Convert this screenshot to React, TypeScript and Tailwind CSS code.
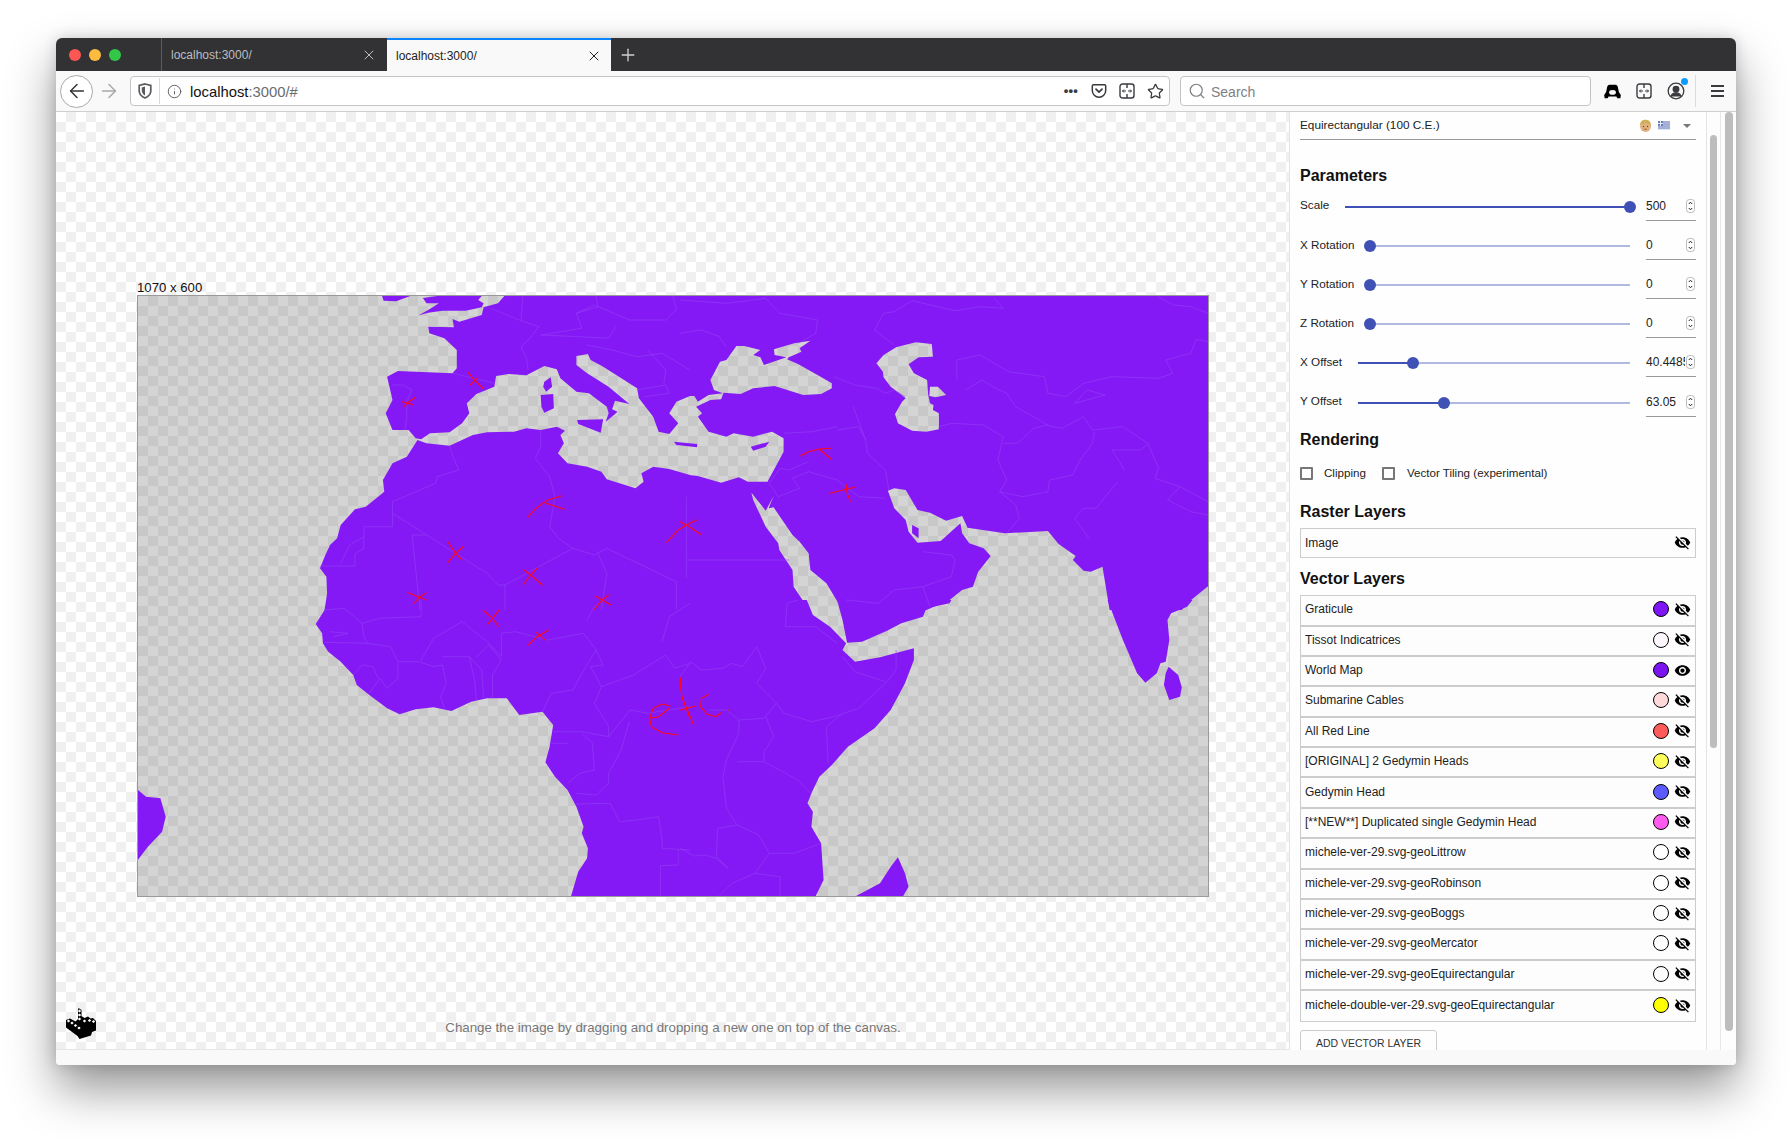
import React from "react";
import { ArrowLeft, ArrowRight, Info, Plus, Search, Star, X } from "lucide-react";
import { MdVisibility, MdVisibilityOff } from "react-icons/md";

type Off = [number, number];
const A: Off = [0, 0];
const B: Off = [1540, 0];
const C: Off = [0, 990];
const D: Off = [1540, 990];

const conv = (o: Off, s: string) =>
  s
    .trim()
    .split(/\s+/)
    .map((p) => {
      const [x, y] = p.split(",").map(Number);
      return `${((x + o[0]) / 2.8 - 8).toFixed(1)},${((y + o[1]) / 3 - 26).toFixed(1)}`;
    })
    .join(" ");

const LAND: [Off, string[]][] = [
  [
    A,
    [
      "706,78 785,78 745,94 710,92",
      "820,84 860,78 985,78 975,90 990,100 985,112 940,122 875,122 835,128 808,136 835,120 865,100 830,100",
      "1050,76 1030,100 990,112 985,135 922,155 903,147 907,172 835,170 838,190 880,205 915,240 915,295 903,310 750,303 720,320 735,390 716,430 735,480 780,480 800,505 815,508 840,490 895,487 930,460 950,430 943,400 970,372 1020,350 1025,318 1060,312 1110,316 1160,288 1195,298 1205,325 1250,365 1285,370 1335,410 1340,430 1332,455 1355,435 1365,425 1350,418 1358,392 1398,402 1340,350 1280,310 1250,285 1250,258 1282,252 1290,270 1325,290 1420,355 1425,385 1465,440 1480,485 1510,492 1535,460 1510,430 1530,395 1568,378 1568,76",
      "1252,450 1325,448 1318,488 1255,462",
      "1150,375 1185,372 1187,415 1160,428 1152,410",
      "1160,335 1178,322 1182,350 1165,365 1157,350",
      "1523,515 1588,522 1588,532 1530,525",
      "805,510 830,520 895,527 960,495 1000,487 1075,485 1110,475 1150,480 1195,470 1218,482 1205,495 1215,520 1198,550 1225,580 1280,590 1320,605 1335,628 1415,655 1438,635 1432,610 1465,590 1510,597 1568,615 1568,1020 545,1020 552,970 550,920 532,895 545,860 560,825 580,805 590,765 630,718 660,710 712,665 708,630 735,580 775,560",
    ],
  ],
  [
    B,
    [
      "0,76 1479,76 1479,948 1420,1000 1405,1020 1203,1020 1183,890 1150,905 1130,902 1100,870 1108,858 1060,822 1030,783 910,790 805,773 790,738 745,752 700,728 665,720 632,660 600,655 582,662 600,715 632,750 640,785 665,818 730,813 785,760 790,790 810,820 850,835 870,858 835,905 820,950 790,960 755,990 690,1020 455,1020 410,940 365,900 360,850 335,815 315,795 262,712 248,715 262,678 240,722 200,668 205,690 240,770 275,820 278,840 315,900 318,950 362,1020 0,1020 0,612 50,618 115,638 165,622 190,635 245,635 260,605 290,545 290,505 258,485 205,500 150,490 130,500 80,485 50,440 62,430 45,410 85,390 115,388 122,368 170,372 205,355 265,348 345,375 395,372 425,355 425,340 385,315 330,282 300,268 305,262 340,245 335,235 365,212 320,220 263,238 265,255 298,262 235,285 225,262 205,255 225,240 180,228 158,228 130,270 112,275 85,330 95,360 120,370 80,375 50,395 40,378 0,378",
      "550,280 570,255 605,232 660,217 705,222 708,260 668,262 640,283 655,310 692,330 695,375 700,400 710,405 708,420 725,430 725,478 690,485 650,482 610,460 602,432 622,395 632,385 590,350 570,322 568,305",
      "700,350 722,350 745,375 715,382 698,378",
    ],
  ],
  [B, ["198,530 250,515 240,530 205,542", "650,765 668,775 668,805 650,790"]],
  [
    C,
    [
      "552,0 545,30 520,72 538,100 540,130 555,155 590,185 625,225 635,255 670,285 720,325 755,343 800,328 850,322 900,333 955,305 1000,295 1055,295 1090,345 1155,335 1185,375 1175,440 1163,487 1190,530 1225,570 1250,620 1270,680 1265,700 1282,745 1280,775 1255,815 1235,888 1568,888 1568,0",
      "22,570 45,590 85,595 100,650 90,695 50,740 22,780",
    ],
  ],
  [
    D,
    [
      "0,0 355,0 372,45 420,80 465,130 455,150 490,185 560,172 655,145 655,180 630,250 590,330 545,385 470,440 425,495 390,530 370,575 357,610 372,635 368,680 395,730 402,840 380,888 0,888",
      "440,0 455,60 468,128 510,125 580,92 620,70 680,50 690,25 755,10 760,0",
      "493,888 560,850 590,800 610,772 630,820 640,860 625,888",
      "1197,0 1240,120 1280,220 1303,248 1335,220 1345,190 1360,185 1370,120 1365,60 1375,40 1420,20 1435,0",
      "1368,200 1395,225 1405,262 1400,290 1370,300 1355,255 1360,220",
    ],
  ],
];

const BORDERS: [Off, string[]][] = [
  [
    A,
    [
      "903,310 945,320 1020,340",
      "735,345 765,345 790,360 775,395 775,440 770,480",
      "895,527 905,560 920,600 860,620 855,640 790,670 735,695",
      "735,695 735,770 655,770 655,835 630,850 630,888 533,888",
      "735,730 1000,910 1030,945 1050,945 1240,835 1300,855 1335,835 1530,935 1530,1020",
      "790,795 830,795",
      "790,795 812,1020",
      "1150,480 1150,530 1135,565 1175,620 1190,680 1175,770 1200,805 1240,835",
      "1050,945 1050,1020",
      "1310,850 1335,910 1320,1020",
      "1010,115 1090,150 1145,170 1120,205 1095,230 1110,265 1115,300",
      "1100,78 1095,150",
      "1280,225 1350,240 1420,260 1490,250 1568,300",
      "1250,130 1300,105 1400,150 1500,150 1530,120 1520,78",
      "1150,195 1260,200 1340,205 1360,170",
      "1420,360 1500,345 1510,370 1440,380",
      "1305,78 1310,110 1250,130 1265,175 1150,195",
      "1450,240 1500,300 1495,340",
      "590,880 615,825 655,800",
    ],
  ],
  [
    B,
    [
      "0,190 60,180 110,200 130,230",
      "0,90 130,100 240,85 280,130 385,150 380,190 330,220",
      "545,180 570,130 600,125 650,92 770,122 840,110 905,115 880,85",
      "545,180 600,225",
      "775,330 775,270 840,255 920,305 1020,320 1030,370 1080,380 1130,340 1210,320 1340,325 1380,310 1360,270 1430,250 1445,208 1479,215",
      "800,360 845,330 875,350 915,370 940,410 1035,468 1070,475 1130,440 1155,480 1240,470 1310,520 1340,595 1330,625 1400,650 1479,695",
      "1210,540 1290,540 1310,520",
      "1245,600 1210,540",
      "430,320 490,345 550,355 575,370 600,360 630,380",
      "485,410 520,510 525,550 575,600 585,660",
      "440,480 500,470 520,510",
      "290,490 370,485 440,470",
      "360,575 305,600 280,595 250,640 275,680 335,655 315,625 360,605 440,630 500,680 575,685",
      "725,470 760,460 850,465 905,500 890,570 915,630 895,665 940,705 950,745 915,790",
      "905,520 945,520 990,475 1030,465",
      "895,665 960,680 1030,665 1035,630 1100,615 1120,570 1155,520 1160,485",
      "1225,635 1165,715 1130,715 1105,745 1145,805",
      "1365,690 1400,650",
      "1365,690 1430,725 1479,735",
      "1105,400 1190,375 1140,360 1105,400",
      "18,680 18,925",
      "18,870 305,870",
      "680,845 760,855 770,870 760,920 680,950 700,1010",
      "465,990 555,1000 600,960 680,950",
      "1479,130 1430,110 1380,105 1340,80",
    ],
  ],
  [
    C,
    [
      "545,30 600,25 650,70 655,110 665,130 730,140 750,185 750,235 720,265 700,235 670,280",
      "650,70 700,55 815,50 815,0",
      "815,180 850,115 930,65 1000,125 1040,170 1040,100 1080,95 1170,120 1270,100 1305,150 1265,220 1240,270 1180,280 1155,335",
      "625,225 650,195 680,200 695,235",
      "750,185 810,185 850,200 875,195 885,250 870,290 880,325",
      "875,170 950,170 965,240 970,300",
      "950,170 985,210 990,295",
      "1015,295 1015,225 1040,180 1005,135 970,170",
      "545,127 670,130",
      "1305,150 1325,195 1290,200 1320,260 1410,225 1500,165 1525,205 1568,190",
      "1320,260 1300,310 1340,380 1340,410 1265,395 1185,395",
      "1340,410 1400,330 1450,340 1568,320",
      "1398,365 1375,450 1340,520 1340,550 1305,585 1250,580",
      "1250,612 1345,610 1370,665 1420,660 1480,650 1490,720 1490,745 1568,750",
      "1265,400 1295,430 1300,510 1260,520 1225,550",
      "1180,430 1225,430",
      "1485,888 1485,797 1535,795 1535,750",
      "1280,60 1300,20 1325,0",
      "1490,125 1510,50 1568,10",
      "560,95 610,100 570,110",
    ],
  ],
  [
    D,
    [
      "0,230 30,185 60,210 120,205 145,190 175,200 215,140 240,205 215,250 270,310 290,340 370,365 430,350 500,325 580,245 605,210 605,150",
      "295,80 300,10 330,0",
      "295,80 380,80 440,130",
      "455,170 490,215 575,245",
      "270,310 235,355 165,360 130,330 80,330",
      "165,360 165,400 130,480 120,530 125,575 130,625 160,675 220,705",
      "240,350 262,410 235,455 235,485 330,540 365,580",
      "160,485 235,485",
      "415,490 410,380 450,345",
      "220,705 250,760 320,760 395,730",
      "160,675 105,685 102,770 135,805 100,775 70,765 40,768 0,745",
      "250,760 210,820 145,850 110,888",
      "210,820 280,830 280,888",
    ],
  ],
];

const RED: [Off, string[]][] = [
  [
    A,
    [
      "945,305 960,325 990,357",
      "952,345 975,322",
      "765,412 780,395 800,382",
      "762,395 795,405",
      "1113,742 1140,712 1170,690 1207,678",
      "1165,700 1217,718",
      "890,816 912,850 930,870",
      "888,880 912,850 935,828",
      "1100,898 1122,915 1155,945",
      "1100,945 1122,915 1142,892",
      "778,968 810,982 830,990",
      "795,1000 810,982 830,968",
      "1302,977 1322,990 1347,1005",
      "1300,1018 1322,990 1340,975",
      "1502,818 1535,780 1558,765 1587,750",
      "1540,755 1558,765 1601,795",
    ],
  ],
  [
    B,
    [
      "337,558 360,545 390,537 423,535",
      "390,537 423,567",
      "420,670 465,658 490,652",
      "465,642 468,670 477,695",
    ],
  ],
  [
    C,
    [
      "988,30 1015,55 1032,80",
      "1000,75 1015,55 1035,28",
      "1115,135 1140,110 1172,90",
      "1135,95 1165,122",
      "1513,318 1490,312 1465,325 1455,355 1480,350 1510,325",
      "1455,355 1460,380 1490,398 1535,405",
      "1540,232 1545,290 1568,355",
    ],
  ],
  [
    D,
    [
      "0,232 5,290 38,375",
      "0,330 45,318",
      "80,283 60,295 58,320 75,342 100,350 115,338",
      "133,330 138,330",
    ],
  ],
];

const MapArt = () => (
  <svg width="1070" height="600" viewBox="0 0 1070 600" className="block overflow-hidden">
    {LAND.map(([o, polys], i) => (
      <path
        key={i}
        fill="#8419f6"
        fillRule="evenodd"
        d={polys.map((p) => "M" + conv(o, p).split(" ").join("L") + "Z").join("")}
      />
    ))}
    {BORDERS.map(([o, ls], i) =>
      ls.map((l, j) => (
        <polyline key={`${i}-${j}`} points={conv(o, l)} fill="none" stroke="#9440f3" strokeWidth="0.6" />
      ))
    )}
    {RED.map(([o, ls], i) =>
      ls.map((l, j) => (
        <polyline key={`${i}-${j}`} points={conv(o, l)} fill="none" stroke="#ff0a14" strokeWidth="1.1" />
      ))
    )}
  </svg>
);

const ReaderIcon = () => (
  <svg width="16" height="16" viewBox="0 0 16 16" fill="none" stroke="#3a3a3f" strokeWidth="1.4">
    <rect x="1" y="1" width="14" height="14" rx="2.5" />
    <path d="M8 1v4M8 11v4" />
    <path d="M3.5 8h3.5M12.5 8H9M5 6.5L3.5 8 5 9.500M11 6.5L12.5 8 11 9.500" strokeWidth="1" />
  </svg>
);

const PocketIcon = () => (
  <svg width="16" height="16" viewBox="0 0 16 16" fill="none" stroke="#3a3a3f" strokeWidth="1.5">
    <path d="M2.500 1.800h11c.7 0 1.200.5 1.200 1.200v4.500c0 3.700-3 6.700-6.700 6.700s-6.700-3-6.700-6.700V3c0-.7.5-1.200 1.200-1.200z" />
    <path d="M5 6.200L8 9.200l3-3" strokeWidth="1.700" strokeLinecap="round" strokeLinejoin="round" />
  </svg>
);

const ShieldIcon = () => (
  <svg width="14" height="16" viewBox="0 0 14 16" fill="none">
    <path d="M7 1l5.800 1.500v5.300c0 3.400-2.500 5.900-5.800 7.200C3.700 13.700 1.200 11.200 1.200 7.800V2.500z" stroke="#5b5b5f" strokeWidth="1.700" />
    <path d="M7 3.500v9c-1.700-1-3.200-2.600-3.200-4.800V4.400z" fill="#5b5b5f" />
  </svg>
);

const SpyIcon = () => (
  <svg width="17" height="17" viewBox="0 0 19 17" fill="#000">
    <path d="M6 1h7c1.200 0 2.200 1 2.600 3l1 5 2.200 3.500-.5 3.500h-3.300l-1.200-2H5.200L4 16H.7L.2 12.500 2.400 9l1-5C3.800 2 4.800 1 6 1z" />
    <ellipse cx="9.500" cy="9.500" rx="3.800" ry="2.600" fill="#f9f9fa" />
  </svg>
);

const ProfileIcon = () => (
  <div className="relative h-[18px] w-[18px]">
    <svg width="18" height="18" viewBox="0 0 18 18" fill="none" stroke="#3a3a3f" strokeWidth="1.300">
      <circle cx="9" cy="9" r="7.800" />
      <circle cx="9" cy="7.200" r="2.800" fill="#3a3a3f" />
      <path d="M3.800 14.500c1-2.600 2.900-3.600 5.200-3.600s4.200 1 5.200 3.600" fill="#3a3a3f" />
    </svg>
    <span className="absolute right-[-3px] top-[-4px] h-[7px] w-[7px] rounded-full bg-[#0a9dff]" />
  </div>
);

const Logo = () => (
  <svg width="30" height="31" viewBox="0 0 30 31" className="absolute bottom-[10px] left-[10px]">
    <path d="M12.500 0L15.500 2V8L18.500 10 22 8.500 24.500 10.500 27 10 30 13V22.500L26 24 25 27.500 13.500 31 11.500 28 0 19.500V12L4 10.500 9.500 13.500 12 11V2z" fill="#000" />
    {[
      [13.5, 3],
      [13.5, 7],
      [13.5, 11],
      [2.5, 13],
      [6, 15],
      [9.5, 17.5],
      [13, 20],
      [18.5, 13],
      [23.5, 12.5],
      [27.5, 13.5],
    ].map(([x, y], i) => (
      <path key={i} d={`M${x} ${y - 1.5}l1.700 1.500-1.700 1.500-1.700-1.500z`} fill="#fff" />
    ))}
  </svg>
);

const Spinner = () => (
  <svg width="9" height="14" viewBox="0 0 9 14" fill="none" className="mr-[1px] shrink-0">
    <rect x="0.500" y="0.500" width="8" height="13" rx="3" stroke="#bbb" />
    <path d="M2.800 5l1.700-1.800L6.200 5M2.800 9l1.700 1.800L6.200 9" stroke="#222" strokeWidth="1" />
  </svg>
);

const Heading = ({ className, children }: { className: string; children: React.ReactNode }) => (
  <h2 className={`h-6 text-[16px] font-bold leading-6 text-[#111] ${className}`}>{children}</h2>
);

const sliders = [
  { label: "Scale", track: 285, thumb: 285, value: "500" },
  { label: "X Rotation", track: 260, thumb: 0, value: "0" },
  { label: "Y Rotation", track: 260, thumb: 0, value: "0" },
  { label: "Z Rotation", track: 260, thumb: 0, value: "0" },
  { label: "X Offset", track: 272, thumb: 55, value: "40.4485" },
  { label: "Y Offset", track: 272, thumb: 86, value: "63.05" },
];

const layers = [
  { name: "Graticule", color: "#7f14f5" },
  { name: "Tissot Indicatrices", color: "#fdf6fd" },
  { name: "World Map", color: "#7a14f0", on: true },
  { name: "Submarine Cables", color: "#fdd9d9" },
  { name: "All Red Line", color: "#ff5b5b" },
  { name: "[ORIGINAL] 2 Gedymin Heads", color: "#ffff5b" },
  { name: "Gedymin Head", color: "#5b5bff" },
  { name: "[**NEW**] Duplicated single Gedymin Head", color: "#ff5bf0" },
  { name: "michele-ver-29.svg-geoLittrow", color: "#ffffff" },
  { name: "michele-ver-29.svg-geoRobinson", color: "#ffffff" },
  { name: "michele-ver-29.svg-geoBoggs", color: "#ffffff" },
  { name: "michele-ver-29.svg-geoMercator", color: "#ffffff" },
  { name: "michele-ver-29.svg-geoEquirectangular", color: "#ffffff" },
  { name: "michele-double-ver-29.svg-geoEquirectangular", color: "#ffff00" },
];

const SliderRow = ({ label, track, thumb, value }: (typeof sliders)[number]) => (
  <div className="flex h-[39.2px] items-center">
    <span className="pb-[3px] text-[11.700px] text-[#222]">{label}</span>
    <div className="relative ml-auto h-[2px] bg-[#b1b9e1]" style={{ width: track }}>
      <div className="h-full bg-[#3f51b5]" style={{ width: thumb }} />
      <span
        className="absolute top-[-5px] ml-[-6px] h-3 w-3 rounded-full bg-[#3f51b5]"
        style={{ left: thumb }}
      />
    </div>
    <div className="ml-4 flex h-[26px] w-[50px] translate-y-[1px] items-start justify-between border-b border-[#999] pt-[4px] text-[12px] leading-[14px] text-[#222]">
      <span className="w-[39px] overflow-hidden whitespace-nowrap">{value}</span>
      <Spinner />
    </div>
  </div>
);

const Tab = ({ active }: { active?: boolean }) => (
  <div
    className={
      active
        ? "flex h-full w-[224px] items-center justify-between border-t-2 border-[#0a84ff] bg-[#f9f9fa] pl-[9px] pr-[9px] text-[#222]"
        : "flex h-full w-[226px] items-center justify-between border-l border-[#5c5c5f] pl-[9px] pr-[10px] text-[#bdbdc0]"
    }
  >
    <span className={active ? "text-[12px]" : "pt-[1px] text-[12px]"}>localhost:3000/</span>
    <X size={16} strokeWidth={1.500} />
  </div>
);

export default function App() {
  return (
    <div className="h-[1139px] w-[1792px] overflow-hidden bg-white pl-[56px] pt-[38px] font-['Liberation_Sans',Arial,sans-serif]">
      <div className="flex h-[1027px] w-[1680px] flex-col overflow-hidden rounded-t-[6px] rounded-b-[4px] bg-[#f9f9f9] shadow-[0_24px_48px_rgba(0,0,0,0.42),0_0_14px_rgba(0,0,0,0.16)]">
        {/* tab strip */}
        <div className="flex h-[33px] shrink-0 items-stretch bg-[#323234]">
          <div className="flex w-[105px] items-center gap-2 pl-[13px]">
            <span className="h-3 w-3 rounded-full bg-[#fc5753]" />
            <span className="h-3 w-3 rounded-full bg-[#fdbc40]" />
            <span className="h-3 w-3 rounded-full bg-[#33c748]" />
          </div>
          <Tab />
          <Tab active />
          <div className="flex w-[34px] items-center justify-center text-[#d0d0d2]">
            <Plus size={20} strokeWidth={1.600} />
          </div>
        </div>

        {/* toolbar */}
        <div className="flex h-[41px] shrink-0 items-center border-b border-[#cfcfd0] bg-[#f9f9fa]">
          <div className="ml-[4px] flex h-[33px] w-[33px] items-center justify-center rounded-full border border-[#a9a9ab] bg-white text-[#333]">
            <ArrowLeft size={22} strokeWidth={1.600} />
          </div>
          <div className="ml-[5px] text-[#a8a8aa]">
            <ArrowRight size={22} strokeWidth={1.600} />
          </div>
          <div className="ml-[10px] flex h-[30px] w-[1040px] items-center rounded-[4px] border border-[#c4c4c6] bg-white">
            <div className="ml-[7px] flex w-[21px] justify-start">
              <ShieldIcon />
            </div>
            <span className="h-[26px] w-px bg-[#d9d9da]" />
            <Info size={15} strokeWidth={1.500} className="ml-[7px] text-[#5b5b5f]" />
            <span className="ml-[8px] pt-[2px] text-[14.800px] text-[#111]">
              localhost<span className="text-[#6b6b6f]">:3000/#</span>
            </span>
            <div className="ml-auto mr-[5px] flex items-center gap-[12px] text-[#3a3a3f]">
              <span className="w-[16px] text-center text-[13px] font-bold leading-[8px] tracking-[0.2px]">•••</span>
              <PocketIcon />
              <ReaderIcon />
              <Star size={17} strokeWidth={1.800} />
            </div>
          </div>
          <div className="ml-[10px] flex h-[30px] w-[411px] items-center rounded-[4px] border border-[#c4c4c6] bg-white pl-[7px] text-[#808084]">
            <Search size={18} strokeWidth={1.600} />
            <span className="ml-[5px] pt-[2px] text-[14px]">Search</span>
          </div>
          <div className="ml-[13px]">
            <SpyIcon />
          </div>
          <div className="ml-[15px]">
            <ReaderIcon />
          </div>
          <div className="ml-[15px]">
            <ProfileIcon />
          </div>
          <span className="ml-[10px] h-[32px] w-px bg-[#dcdcdd]" />
          <div className="ml-[15px] flex h-[12px] w-[13px] flex-col justify-between">
            <span className="h-[2px] bg-[#3a3a3f]" />
            <span className="h-[2px] bg-[#3a3a3f]" />
            <span className="h-[2px] bg-[#3a3a3f]" />
          </div>
        </div>

        {/* content */}
        <div className="flex min-h-0 flex-1">
          <div className="relative w-[1233px] shrink-0 border-b border-[#e6e6e6] bg-[conic-gradient(#f0f0f0_25%,#ffffff_0_50%,#f0f0f0_0_75%,#ffffff_0)] bg-[length:20px_20px] pl-[81px] pt-[167px]">
            <div className="w-[1072px]">
              <div className="h-4 text-[13.200px] leading-[18px] text-[#111]">1070 x 600</div>
              <div className="border border-[#9a9a9a] bg-[conic-gradient(#c8c8c8_25%,#d4d4d4_0_50%,#c8c8c8_0_75%,#d4d4d4_0)] bg-[length:20px_20px]">
                <MapArt />
              </div>
              <p className="mt-[123px] text-center text-[13.300px] leading-4 text-[#777]">
                Change the image by dragging and dropping a new one on top of the canvas.
              </p>
            </div>
            <Logo />
          </div>

          {/* sidebar */}
          <div className="h-full w-[418px] shrink-0 overflow-hidden border-l border-r border-[#e4e4e4] bg-[#fefefe] px-[10px]">
            <div className="flex h-[28px] items-center border-b border-[#999]">
              <span className="text-[11.800px] text-[#222]">Equirectangular (100 C.E.)</span>
              <svg width="13" height="14" viewBox="0 0 13 14" className="ml-auto">
                <ellipse cx="6.500" cy="7" rx="5.500" ry="6" fill="#e2b27e" />
                <path d="M1 6C1.500 2 4 .8 6.500.8S11.500 2 12 6C9 3.500 4 3.500 1 6z" fill="#cfae58" />
                <circle cx="4.500" cy="7.500" r=".7" fill="#6b4a2d" />
                <circle cx="8.500" cy="7.500" r=".7" fill="#6b4a2d" />
                <path d="M5 10.200h3" stroke="#a0683c" />
              </svg>
              <svg width="12" height="9" viewBox="0 0 12 9" className="ml-[6px]">
                <rect width="12" height="9" fill="#dfe3f1" />
                <path d="M0 1h12M0 3h12M0 5h12M0 7h12" stroke="#6b7cc2" />
                <rect width="5" height="5" fill="#6b7cc2" />
                <path d="M2.500 0v5M0 2.500h5" stroke="#e8ebf6" />
              </svg>
              <svg width="8" height="4" viewBox="0 0 8 4" className="ml-[13px] mr-[5px]">
                <path d="M0 0h8L4 4z" fill="#777" />
              </svg>
            </div>

            <Heading className="mt-[23px] pt-[1px]">Parameters</Heading>
            {sliders.map((s) => (
              <SliderRow key={s.label} {...s} />
            ))}

            <Heading className="mt-[5px] pt-[1px]">Rendering</Heading>
            <div className="mt-[12px] flex h-5 items-center text-[11.600px] text-[#222]">
              <span className="h-[13px] w-[13px] rounded-[1px] border-2 border-[#777]" />
              <span className="ml-[11px]">Clipping</span>
              <span className="ml-[16px] h-[13px] w-[13px] rounded-[1px] border-2 border-[#777]" />
              <span className="ml-[12px]">Vector Tiling (experimental)</span>
            </div>

            <Heading className="mt-[16px] pt-[1px]">Raster Layers</Heading>
            <div className="mt-[5px] flex h-[30px] items-center border border-[#ccc] bg-[#fdfdfd] pb-[1px] pl-[4px] pr-[4px] text-[12px] text-[#222]">
              <span>Image</span>
              <MdVisibilityOff size={17} className="ml-auto text-black" />
            </div>

            <Heading className="mt-[8px] pt-[1px]">Vector Layers</Heading>
            <div className="mt-[5px] border border-[#ccc]">
              {layers.map((l) => (
                <div
                  key={l.name}
                  className="flex h-[30.380px] items-center border-b-2 border-[#ccc] bg-[#fdfdfd] pb-[2px] pl-[4px] pr-[4px] text-[12px] text-[#222] last:border-b-0"
                >
                  <span>{l.name}</span>
                  <span
                    className="ml-auto h-4 w-4 rounded-full border border-black"
                    style={{ backgroundColor: l.color }}
                  />
                  {l.on ? (
                    <MdVisibility size={17} className="ml-[5px] text-black" />
                  ) : (
                    <MdVisibilityOff size={17} className="ml-[5px] text-black" />
                  )}
                </div>
              ))}
            </div>

            <div className="mt-[8px] flex h-[30px] w-[137px] justify-center rounded-[3px] border border-[#ccc] pt-[6px] text-[10.500px] leading-[13px] text-[#333]">
              ADD VECTOR LAYER
            </div>
          </div>

          {/* inner scrollbar */}
          <div className="h-full w-[14px] shrink-0 border-r border-[#e8e8e8] bg-[#fdfdfd] pl-[3px] pt-[23px]">
            <div className="h-[613px] w-[7px] rounded-full bg-[#bdbdbd]" />
          </div>
          {/* outer scrollbar */}
          <div className="h-full w-[15px] shrink-0 bg-[#fdfdfd] pl-[4px]">
            <div className="h-[919px] w-[8px] rounded-full bg-[#bdbdbd]" />
          </div>
        </div>

        <div className="h-[15px] shrink-0 bg-[#f9f9f9]" />
      </div>
    </div>
  );
}
